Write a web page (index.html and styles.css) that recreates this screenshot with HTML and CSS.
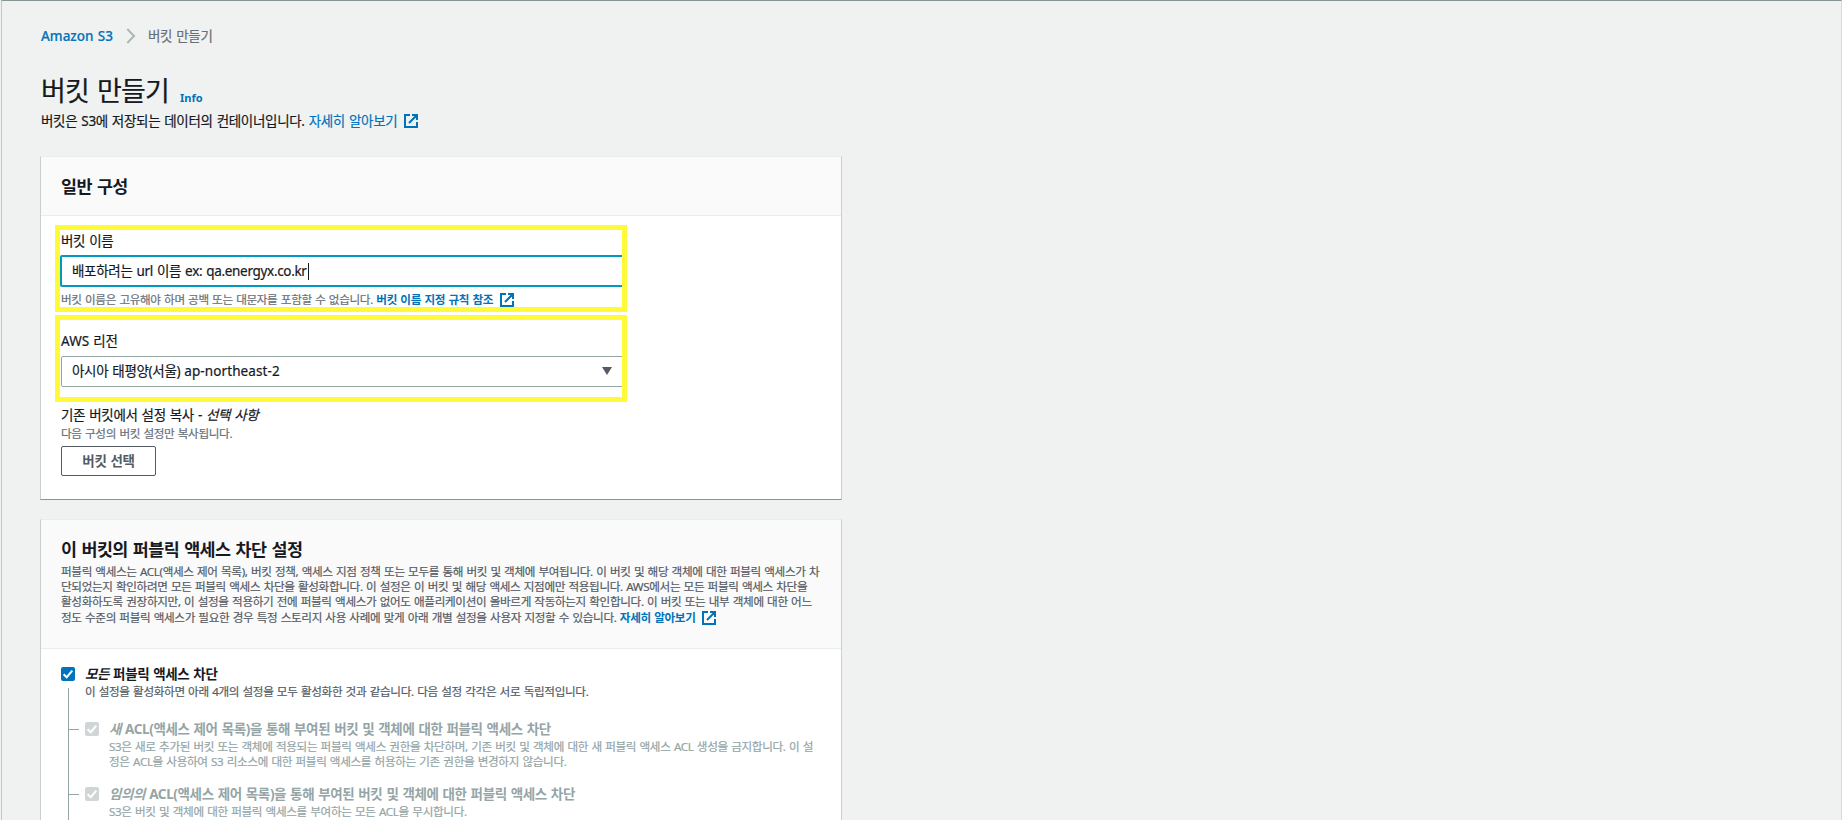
FILE: index.html
```html
<!DOCTYPE html>
<html lang="ko">
<head>
<meta charset="utf-8">
<title>버킷 만들기</title>
<link rel="stylesheet" href="styles.css">
</head>
<body>
<svg class="defs" width="0" height="0" aria-hidden="true">
  <symbol id="external" viewBox="0 0 14 14"><path d="M6 1H1V13H13V8M8 1H13V6M13 1L5 9" fill="none" stroke="currentColor" stroke-width="2"/></symbol>
  <symbol id="check" viewBox="0 0 14 14"><path d="M2.6 7.2L5.7 10.2L11.3 3.7" fill="none" stroke="#fff" stroke-width="2"/></symbol>
</svg>
<main class="page">
  <nav class="crumbs">
    <a class="crumb-link">Amazon S3</a>
    <svg class="chevron" viewBox="0 0 10 16"><path d="M1.3 1L8 8L1.3 15" fill="none" stroke="#aab7b8" stroke-width="2"/></svg>
    <span class="crumb-current">버킷 만들기</span>
  </nav>
  <header class="heading">
    <h1 class="title">버킷 만들기</h1>
    <a class="info">Info</a>
  </header>
  <p class="intro"><span>버킷은 S3에 저장되는 데이터의 컨테이너입니다. <a class="link">자세히 알아보기</a></span><svg class="ext"><use href="#external"/></svg></p>

  <section class="panel general">
    <div class="panel-head"><h2 class="panel-title">일반 구성</h2></div>
    <div class="panel-body">
      <div class="field">
        <div class="label">버킷 이름</div>
        <div class="input"><span>배포하려는 url 이름 ex: qa.energyx.co.kr</span><i class="caret"></i></div>
        <div class="hint name-hint"><span>버킷 이름은 고유해야 하며 공백 또는 대문자를 포함할 수 없습니다. <a class="link strong">버킷 이름 지정 규칙 참조</a></span><svg class="ext"><use href="#external"/></svg></div>
        <i class="mark"></i>
      </div>
      <div class="field region">
        <div class="label"><span class="latin">AWS</span> 리전</div>
        <div class="select"><span>아시아 태평양(서울) <span class="latin">ap-northeast-2</span></span><svg class="arrow" viewBox="0 0 10 8"><path d="M0 0H10L5 8Z" fill="#545b64"/></svg></div>
        <i class="mark"></i>
      </div>
      <div class="copy">
        <div class="label">기존 버킷에서 설정 복사 - <em>선택 사항</em></div>
        <div class="hint">다음 구성의 버킷 설정만 복사됩니다.</div>
        <button class="button">버킷 선택</button>
      </div>
    </div>
  </section>

  <section class="panel access">
    <div class="panel-head tall">
      <h2 class="panel-title">이 버킷의 퍼블릭 액세스 차단 설정</h2>
      <div class="desc">
        <div>퍼블릭 액세스는 ACL(액세스 제어 목록), 버킷 정책, 액세스 지점 정책 또는 모두를 통해 버킷 및 객체에 부여됩니다. 이 버킷 및 해당 객체에 대한 퍼블릭 액세스가 차</div>
        <div>단되었는지 확인하려면 모든 퍼블릭 액세스 차단을 활성화합니다. 이 설정은 이 버킷 및 해당 액세스 지점에만 적용됩니다. AWS에서는 모든 퍼블릭 액세스 차단을</div>
        <div>활성화하도록 권장하지만, 이 설정을 적용하기 전에 퍼블릭 액세스가 없어도 애플리케이션이 올바르게 작동하는지 확인합니다. 이 버킷 또는 내부 객체에 대한 어느</div>
        <div class="last"><span>정도 수준의 퍼블릭 액세스가 필요한 경우 특정 스토리지 사용 사례에 맞게 아래 개별 설정을 사용자 지정할 수 있습니다. <a class="link strong">자세히 알아보기</a></span><svg class="ext"><use href="#external"/></svg></div>
      </div>
    </div>
    <div class="options">
      <div class="option">
        <svg class="box on"><use href="#check"/></svg>
        <div class="option-text">
          <div class="option-title"><em>모든</em> 퍼블릭 액세스 차단</div>
          <div class="option-desc">이 설정을 활성화하면 아래 4개의 설정을 모두 활성화한 것과 같습니다. 다음 설정 각각은 서로 독립적입니다.</div>
        </div>
      </div>
      <div class="tree">
        <div class="option sub">
          <svg class="box"><use href="#check"/></svg>
          <div class="option-text">
            <div class="option-title"><em>새</em> ACL(액세스 제어 목록)을 통해 부여된 버킷 및 객체에 대한 퍼블릭 액세스 차단</div>
            <div class="option-desc">S3은 새로 추가된 버킷 또는 객체에 적용되는 퍼블릭 액세스 권한을 차단하며, 기존 버킷 및 객체에 대한 새 퍼블릭 액세스 ACL 생성을 금지합니다. 이 설</div>
            <div class="option-desc">정은 ACL을 사용하여 S3 리소스에 대한 퍼블릭 액세스를 허용하는 기존 권한을 변경하지 않습니다.</div>
          </div>
        </div>
        <div class="option sub">
          <svg class="box"><use href="#check"/></svg>
          <div class="option-text">
            <div class="option-title"><em>임의의</em> ACL(액세스 제어 목록)을 통해 부여된 버킷 및 객체에 대한 퍼블릭 액세스 차단</div>
            <div class="option-desc">S3은 버킷 및 객체에 대한 퍼블릭 액세스를 부여하는 모든 ACL을 무시합니다.</div>
          </div>
        </div>
      </div>
    </div>
  </section>
</main>
</body>
</html>
```
FILE: styles.css
```css
* { box-sizing: border-box; }
html, body { height: 820px; overflow: hidden; }
body {
  margin: 0;
  background: #f0f2f2;
  color: #16191f;
  font: 13.5px/20px "Noto Sans", "Noto Sans CJK KR", sans-serif;
  letter-spacing: -0.32px;
  word-spacing: 0.8px;
  white-space: nowrap;
  -webkit-text-stroke: 0.2px;
}
h1, h2, p { margin: 0; font-weight: 400; }
.defs { display: block; height: 0; }
.page {
  height: 820px;
  margin-left: 1px;
  padding: 24px 0 0 39px;
  border-top: 1px solid #879596;
  border-left: 1px solid #c3c9c9;
  border-right: 1px solid #d5dbdb;
  overflow: hidden;
}
.crumbs { display: flex; align-items: center; height: 22px; }
.crumb-link { width: 85px; color: #0073bb; font-weight: 500; letter-spacing: 0; }
.chevron { width: 10px; height: 16px; margin-right: 12px; }
.crumb-current { color: #687078; }
.heading { display: flex; margin-top: 25px; height: 38px; }
.title { font-size: 27px; line-height: 38px; letter-spacing: -0.8px; word-spacing: 1.6px; }
.info { margin-left: 11px; padding-top: 17px; color: #0073bb; font-size: 11px; line-height: 18px; font-weight: 700; letter-spacing: 0; }
.intro { display: flex; align-items: center; height: 22px; margin-bottom: 24px; }
.link { color: #0073bb; }
.strong { font-weight: 700; }
.ext { width: 14px; height: 14px; margin-left: 7px; color: #0073bb; }
.panel {
  width: 802px;
  margin-left: -1px;
  background: #fff;
  border: 1px solid #c9cece;
  border-top-color: #eaeded;
}
.general { height: 344px; border-bottom-color: #879596; margin-bottom: 19px; }
.access { height: 330px; }
.panel-head { height: 59px; padding: 18px 20px 0; background: #fafafa; border-bottom: 1px solid #eaeded; }
.panel-title { font-size: 17.4px; line-height: 22px; font-weight: 700; letter-spacing: -0.54px; word-spacing: 1px; -webkit-text-stroke: 0; }
.panel-head.tall { height: 129px; padding-top: 18px; }
.panel-body { padding: 15px 20px 0; }
.field { position: relative; width: 562px; }
.label { height: 20px; }
.latin { letter-spacing: 0.1px; }
.input { display: flex; align-items: center; width: 566px; height: 32px; margin: 4px 0 0 -1px; padding-left: 10px; border: 2px solid #0099c2; border-radius: 2px; }
.caret { width: 1px; height: 17px; margin-left: 1px; background: #16191f; }
.hint { font-size: 11.6px; line-height: 16px; letter-spacing: -0.34px; word-spacing: 0.7px; color: #687078; }
.name-hint { display: flex; align-items: center; height: 16px; margin-top: 5px; }
.mark { position: absolute; left: -6px; top: -6px; width: 572px; height: 87px; border: 5px solid #fffa37; }
.region { margin-top: 23px; }
.region .mark { top: -16px; }
.select { display: flex; align-items: center; justify-content: space-between; width: 565px; height: 31px; margin-top: 5px; padding: 0 13px 2px 10px; border: 1px solid #95a5a6; border-radius: 2px; }
.arrow { width: 10px; height: 8px; }
.copy { margin-top: 18px; }
.copy .hint { height: 16px; margin-top: 1px; }
.button { display: block; width: 95px; height: 30px; margin-top: 4px; padding: 0; background: #fff; border: 1px solid #545b64; border-radius: 2px; color: #545b64; font: inherit; font-weight: 700; letter-spacing: inherit; word-spacing: inherit; }
.desc { margin-top: 4px; font-size: 11.6px; line-height: 15px; letter-spacing: -0.345px; word-spacing: 0.7px; color: #545b64; }
.last { display: flex; align-items: center; height: 17px; }
.options { padding: 15px 20px 0; }
.option { display: flex; align-items: flex-start; }
.box { flex: none; width: 14px; height: 14px; margin: 3px 10px 0 0; background: #d0d6d6; border-radius: 2px; }
.box.on { background: #0073bb; }
.option-title { height: 20px; font-weight: 700; letter-spacing: -0.36px; }
.option-desc { font-size: 11.6px; line-height: 15px; letter-spacing: -0.335px; word-spacing: 0.7px; color: #545b64; }
.tree { margin: -11px 0 0 7px; padding-top: 31px; height: 160px; border-left: 1px solid #95a5a6; }
.sub { height: 65px; color: #95a5a6; }
.sub::before { content: ""; width: 10px; height: 1px; margin: 10px 6px 0 0; background: #95a5a6; }
.sub .option-desc { color: #95a5a6; }
.strong, .button, .option-title, .info { -webkit-text-stroke: 0; }
```
